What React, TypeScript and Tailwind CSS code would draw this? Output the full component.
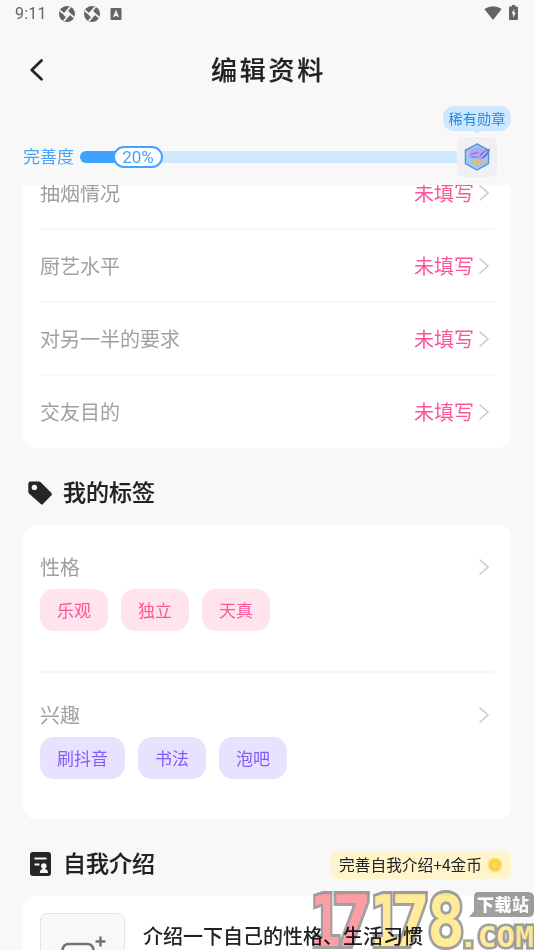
import type { ReactNode } from 'react';

const unfilledRows = ['抽烟情况', '厨艺水平', '对另一半的要求', '交友目的'];

const watermarkDigits = [
    { char: '1', x: 310, width: 31, fill: '#ff9da6' },
    { char: '7', x: 332, width: 40, fill: '#ff9da6' },
    { char: '1', x: 370, width: 31, fill: '#ffeb98' },
    { char: '7', x: 391, width: 39, fill: '#ffeb98' },
    { char: '8', x: 427, width: 38, fill: '#ffeb98' },
];

function ShutterIcon() {
    return (
        <svg viewBox="0 0 16 16" className="w-4 h-4">
            <circle cx="8" cy="8" r="8" fill="#646464" />
            <path d="M8 3.8 L12.2 8 L8 12.2 L3.8 8 Z" fill="#f8f8f8" />
            <path d="M1 4.8 L4.6 7.6 M11.2 1 L8.2 4.6 M15 11.2 L11.4 8.4 M4.8 15 L7.8 11.4" stroke="#f8f8f8" strokeWidth="1.8" />
        </svg>
    );
}

function StatusBar() {
    return (
        <div className="h-7 flex items-center justify-between pl-[15px] pr-4 text-[#646464]">
            <div className="flex items-center">
                <span className="w-[44px] text-[16px] leading-7 font-[Roboto,sans-serif] tracking-[0.2px]">9:11</span>
                <ShutterIcon />
                <span className="w-[9px]"></span>
                <ShutterIcon />
                <svg viewBox="0 0 12 12" className="w-3 h-3 ml-[10px]">
                    <rect x="0.5" y="0" width="11" height="12" rx="1.3" fill="#646464" />
                    <path d="M3.7 9 L6 3.6 L8.3 9 M4.4 7.2 H7.6" fill="none" stroke="#f8f8f8" strokeWidth="1.4" />
                </svg>
            </div>
            <div className="flex items-center gap-[7px] pb-[3px]">
                <svg viewBox="0 0 18 14" className="w-[18px] h-[14px]">
                    <path d="M0.3 3 Q9 -2.6 17.7 3 L9 14 Z" fill="#646464" />
                </svg>
                <svg viewBox="0 0 9 15" className="w-[9px] h-[15px]">
                    <path d="M2.8 0 H6.2 V1.5 H8 Q9 1.5 9 2.5 V14 Q9 15 8 15 H1 Q0 15 0 14 V2.5 Q0 1.5 1 1.5 H2.8 Z" fill="#646464" />
                    <path d="M5.3 3.8 L2.5 8.8 H4.2 V12.8 L6.8 7.7 H5.2 Z" fill="#f8f8f8" />
                </svg>
            </div>
        </div>
    );
}

function Header() {
    return (
        <div className="h-[84px] relative flex items-center justify-center">
            <svg viewBox="0 0 14 22" className="absolute left-[30px] top-[31px] w-[14px] h-[22px]">
                <path d="M11.5 1.5 L1.8 11 L11.5 20.2" fill="none" stroke="#262626" strokeWidth="2.8" strokeLinecap="round" strokeLinejoin="round" />
            </svg>
            <h1 className="text-[26px] leading-[38px] font-medium tracking-[2.8px] text-[#222] pl-[3px] pb-[3px] [-webkit-text-stroke:0.2px]">编辑资料</h1>
        </div>
    );
}

function MedalIcon() {
    return (
        <svg viewBox="0 0 26 28" className="w-[26px] h-[28px]">
            <path d="M13 1 L24.5 7.3 V20.5 L13 27 L1.5 20.5 V7.3 Z" fill="#b4b6f5" stroke="#5594d5" strokeWidth="1.5" />
            <path d="M13 2.8 L22.8 8.3 V11 L3 13 V8.3 Z" fill="#b1a5f2" />
            <path d="M3 14 L13 16 V25.3 L3 19.6 Z" fill="#9dcaf5" />
            <path d="M3 8.3 L13 2.8 L22.8 8.3 V19.8 L13 25.5 L3 19.8 Z" fill="none" stroke="#92d3f5" strokeWidth="1.2" />
            <circle cx="4.5" cy="10" r="2" fill="#eaa5ed" />
            <path d="M6 11.5 L14 9.5 M6.5 14 H14" stroke="#8284e8" strokeWidth="1.4" />
            <path d="M15 15 Q16 8 26 5.5 Q25 14 17 16 Z" fill="#7774d8" />
            <path d="M16 15 L23 8" stroke="#bab6ff" strokeWidth="1.6" />
            <path d="M8 21 L9.5 18 L11.5 21 L13 18 L14.5 21 L18 18.5 M20.5 17 V21" fill="none" stroke="#e8b95f" strokeWidth="2" />
        </svg>
    );
}

function Completeness() {
    return (
        <div className="h-[73px] relative pl-[23px] pr-[37px] pt-[25px]">
            <div className="h-10 flex items-center">
                <span className="w-[57px] shrink-0 text-[17px] leading-10 pb-[2px] text-[#46a4fc]">完善度</span>
                <div className="flex-1 h-3 rounded-l-full bg-[#d0e8ff] flex items-center">
                    <div className="w-[40px] h-3 rounded-l-full bg-[#40a2ff]"></div>
                    <div className="w-[50px] h-[22px] -ml-[7px] rounded-full bg-white border-2 border-[#46a4fc] text-center text-[17px] leading-[18px] text-[#46a4fc] font-[Roboto,sans-serif]">20%</div>
                </div>
                <div className="w-10 h-10 shrink-0 rounded-[7px] bg-[#efeff4] flex items-center justify-center">
                    <MedalIcon />
                </div>
            </div>
            <div className="absolute left-[443px] -top-[6px] w-[68px] h-[25px] rounded-[11px] bg-[#d0e8ff] text-[14.2px] leading-[24px] text-center text-[#2489df]">
                稀有勋章
                <span className="absolute left-[29px] top-[24px] border-x-[5px] border-x-transparent border-t-[4px] border-t-[#d0e8ff]"></span>
            </div>
        </div>
    );
}

function Arrow() {
    return (
        <svg viewBox="0 0 12 18" className="w-3 h-[18px]">
            <path d="M1.5 1.5 L10 9 L1.5 16.5" fill="none" stroke="#cbcbcb" strokeWidth="1.6" />
        </svg>
    );
}

function UnfilledRow({ label, last }: { label: string, last: boolean }) {
    return (
        <div className={`flex items-center text-[20px] leading-[30px] ${last ? 'h-[72px]' : 'h-[73px] border-b-2 border-[#f7f7f7]'}`}>
            <span className="flex-1 text-[#a0a0a0]">{label}</span>
            <span className="text-[#fd559a]">未填写</span>
            <span className="ml-1 mr-1"><Arrow /></span>
        </div>
    );
}

function SectionTitle({ icon, title, children }: { icon: ReactNode, title: string, children?: ReactNode }) {
    return (
        <div className="h-[77px] flex items-center pl-[5px] pt-3">
            <span className="w-[35px] pt-px">{icon}</span>
            <h2 className="flex-1 text-[23px] leading-[34px] font-medium text-[#222] pb-[3px] [-webkit-text-stroke:0.2px]">{title}</h2>
            {children}
        </div>
    );
}

function TagGroup({ label, tags, chipClass }: { label: string, tags: string[], chipClass: string }) {
    return (
        <div>
            <div className="flex items-center justify-between pr-1 h-[30px]">
                <span className="text-[20px] leading-[30px] text-[#a0a0a0]">{label}</span>
                <Arrow />
            </div>
            <div className="flex gap-[13px] mt-[7px]">
                {tags.map((tag) => (
                    <span key={tag} className={`h-[42px] px-[17px] rounded-[14px] text-[17px] leading-[42px] ${chipClass}`}>{tag}</span>
                ))}
            </div>
        </div>
    );
}

function Coin() {
    return (
        <svg viewBox="0 0 16 16" className="w-4 h-4 ml-[5px]">
            <circle cx="8" cy="8" r="7.5" fill="#ffe16b" />
            <circle cx="8" cy="8" r="5.5" fill="#f9c74a" />
            <path d="M8 4 L11 6 V10 L8 12 L5 10 V6 Z" fill="#fdd85b" />
        </svg>
    );
}

function Introduction() {
    return (
        <div className="bg-white rounded-[13px] h-[180px] pl-[17px] pt-[17px] flex">
            <div className="w-[85px] h-[85px] rounded-[7px] bg-[#f8f8f8] border border-[#e4e4e4]">
                <svg viewBox="0 0 83 83" className="w-full h-full" fill="none" stroke="#737373" strokeWidth="2.6">
                    <rect x="21.5" y="30" width="31" height="28" rx="6" />
                    <path d="M59.5 22.5 V32.5 M54.5 27.5 H64.5" strokeWidth="2.4" />
                </svg>
            </div>
            <p className="ml-[18px] mt-[8px] text-[20px] leading-[30px] font-medium text-[#222] whitespace-nowrap">介绍一下自己的性格、生活习惯</p>
        </div>
    );
}

function Watermark() {
    return (
        <svg viewBox="300 880 234 70" className="absolute left-[300px] top-[880px] w-[234px] h-[70px] mix-blend-multiply pointer-events-none">
            <g fontWeight="700" fontFamily="DejaVu Sans Mono" strokeLinejoin="miter" stroke="#a0a0a0">
                {watermarkDigits.map((d) => (
                    <text key={d.x} x={d.x} y="946" fontSize="72" textLength={d.width} lengthAdjust="spacingAndGlyphs" paintOrder="stroke" fill={d.fill} strokeWidth="6">{d.char}</text>
                ))}
                <text x="459" y="947" fontSize="28" textLength="75" lengthAdjust="spacingAndGlyphs" paintOrder="stroke" fill="#ffeb98" strokeWidth="5">.COM</text>
            </g>
            <path d="M478 892 H528 Q534 892 534 898 V911 Q534 917 528 917 H469 L474 911 V897 Q474 892 478 892 Z" fill="#a0a0a0" />
            <text x="477" y="911" fontSize="17" fontWeight="900" fontFamily="Noto Sans CJK SC" textLength="52" fill="#fff">下载站</text>
        </svg>
    );
}

function App() {
    return (
        <div className="relative w-[534px] h-[950px] overflow-hidden bg-[#f8f8f8] font-['Noto_Sans_CJK_SC',sans-serif]">
            <StatusBar />
            <Header />
            <Completeness />
            <div className="h-[765px] overflow-hidden px-[23px]">
                <div className="-mt-[28px] bg-white rounded-[13px] px-[17px]">
                    {unfilledRows.map((label, i) => (
                        <UnfilledRow key={label} label={label} last={i === unfilledRows.length - 1} />
                    ))}
                </div>

                <SectionTitle
                    title="我的标签"
                    icon={
                        <svg viewBox="0 0 24 24" className="w-6 h-6">
                            <path fillRule="evenodd" d="M2.5 0.5 H10.5 Q12 0.5 13 1.5 L23.2 11.8 Q24.5 13.2 23.2 14.5 L15 23 Q14 24 12.8 23 L1.5 13 Q0.3 12 0.3 10.5 V2.7 Q0.3 0.5 2.5 0.5 Z M6.4 3.7 A2.7 2.7 0 1 0 6.4 9.1 A2.7 2.7 0 1 0 6.4 3.7 Z" fill="#262626" />
                        </svg>
                    }
                />
                <div className="bg-white rounded-[13px] h-[294px] px-[17px] pt-[27px]">
                    <TagGroup label="性格" tags={['乐观', '独立', '天真']} chipClass="bg-[#ffe4ee] text-[#fd559a]" />
                    <div className="mt-[40px] mb-[27px] h-[1.6px] bg-[#f6f6f6]"></div>
                    <TagGroup label="兴趣" tags={['刷抖音', '书法', '泡吧']} chipClass="bg-[#e8e2ff] text-[#7e5ff9]" />
                </div>

                <SectionTitle
                    title="自我介绍"
                    icon={
                        <svg viewBox="0 0 24 24" className="w-6 h-6">
                            <rect x="2" y="0" width="21" height="24" rx="3" fill="#262626" />
                            <path d="M6.5 6.5 H18.5 M6.5 12.5 H11.5" stroke="#f8f8f8" strokeWidth="2" />
                            <circle cx="15.8" cy="14" r="2.8" fill="#f8f8f8" />
                            <path d="M14.5 15.5 H17 V17 Q20 17.5 20 21 H11.8 Q11.8 17.5 14.5 17 Z" fill="#f8f8f8" />
                        </svg>
                    }
                >
                    <div className="mt-[2px] h-[28px] pl-2 pr-2 rounded-[5px] bg-[#fff5cc] flex items-center text-[15.7px] leading-[27px] text-[#222]">
                        完善自我介绍+4金币
                        <Coin />
                    </div>
                </SectionTitle>
                <Introduction />
            </div>
            <Watermark />
        </div>
    );
}

export default App;
